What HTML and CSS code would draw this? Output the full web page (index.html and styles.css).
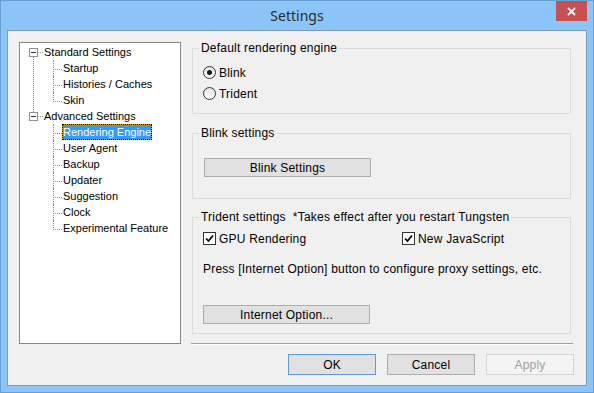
FILE: index.html
```html
<!DOCTYPE html>
<html lang="en">
<head>
  <meta charset="UTF-8" />
  <title>Settings</title>
  <link rel="stylesheet" href="styles.css">
</head>
<body>
  <div class="window">
    <div class="titlebar">
      <span class="title">Settings</span>
      <button class="close" type="button" aria-label="Close">
        <svg width="9" height="9" viewBox="0 0 9 9"><path d="M1 1L8 8M8 1L1 8" stroke="#fff" stroke-width="1.8" fill="none"/></svg>
      </button>
    </div>

    <div class="client">
      <ul class="tree">
        <li class="node">
          <div class="row"><span class="toggle"></span><span class="dash"></span><span class="label">Standard Settings</span></div>
          <ul class="children">
            <li class="leaf"><span class="label">Startup</span></li>
            <li class="leaf"><span class="label">Histories / Caches</span></li>
            <li class="leaf"><span class="label">Skin</span></li>
          </ul>
        </li>
        <li class="node">
          <div class="row"><span class="toggle"></span><span class="dash"></span><span class="label">Advanced Settings</span></div>
          <ul class="children">
            <li class="leaf"><span class="label selected">Rendering Engine</span></li>
            <li class="leaf"><span class="label">User Agent</span></li>
            <li class="leaf"><span class="label">Backup</span></li>
            <li class="leaf"><span class="label">Updater</span></li>
            <li class="leaf"><span class="label">Suggestion</span></li>
            <li class="leaf"><span class="label">Clock</span></li>
            <li class="leaf"><span class="label">Experimental Feature</span></li>
          </ul>
        </li>
      </ul>

      <div class="panel">
        <section class="group group-engine">
          <span class="group-title">Default rendering engine</span>
          <label class="option"><span class="radio checked"></span>Blink</label>
          <label class="option"><span class="radio"></span>Trident</label>
        </section>

        <section class="group group-blink">
          <span class="group-title">Blink settings</span>
          <button class="btn btn-wide" type="button">Blink Settings</button>
        </section>

        <section class="group group-trident">
          <span class="group-title">Trident settings  *Takes effect after you restart Tungsten</span>
          <div class="checks">
            <label class="option"><span class="check"><svg width="9" height="9" viewBox="0 0 9 9"><path d="M1 4.5L3.5 7L8 1.5" stroke="#000" stroke-width="1.7" fill="none"/></svg></span>GPU Rendering</label>
            <label class="option"><span class="check"><svg width="9" height="9" viewBox="0 0 9 9"><path d="M1 4.5L3.5 7L8 1.5" stroke="#000" stroke-width="1.7" fill="none"/></svg></span>New JavaScript</label>
          </div>
          <p class="note">Press [Internet Option] button to configure proxy settings, etc.</p>
          <button class="btn btn-wide" type="button">Internet Option...</button>
        </section>

        <div class="separator"></div>

        <div class="actions">
          <button class="btn btn-default" type="button">OK</button>
          <button class="btn" type="button">Cancel</button>
          <button class="btn" type="button" disabled>Apply</button>
        </div>
      </div>
    </div>
  </div>
</body>
</html>
```

FILE: styles.css
```css
:root {
  --frame: #8bc5f7;
  --face: #f0f0f0;
  --dots: #8a8a8a;
}

* {
  box-sizing: border-box;
}

body {
  margin: 0;
  width: 594px;
  height: 393px;
  overflow: hidden;
  font-family: "Liberation Sans", Arial, sans-serif;
  font-size: 12px;
  line-height: 14px;
  color: #000;
}

.window {
  width: 594px;
  height: 393px;
  border: 1px solid #6a9fd4;
  background: var(--frame);
  display: flex;
  flex-direction: column;
  padding: 0 6px 6px;
}

.titlebar {
  position: relative;
  height: 29px;
  margin: 0 -6px;
  text-align: center;
}

.title {
  font-family: "Noto Sans", "Open Sans", sans-serif;
  font-size: 14px;
  line-height: 29px;
  color: #2b2b2b;
}

.close {
  position: absolute;
  top: 0;
  right: 6px;
  width: 31px;
  height: 20px;
  padding: 0;
  border: 0;
  background: #c75050;
  display: flex;
  align-items: center;
  justify-content: center;
}

.client {
  flex: 1;
  display: flex;
  border: 1px solid #7a9bbf;
  background: var(--face);
  padding: 11px 12px 0 11px;
}

/* tree view */

.tree {
  width: 162px;
  height: 302px;
  margin: 0;
  padding: 1px 0 0;
  list-style: none;
  border: 1px solid #828790;
  background: #fff;
  font-size: 11px;
}

.tree ul {
  list-style: none;
  margin: 0;
  padding: 0;
}

.node {
  position: relative;
}

.node:first-child::after {
  content: "";
  position: absolute;
  left: 13px;
  top: 13px;
  height: 55px;
  border-left: 1px dotted var(--dots);
}

.row {
  display: flex;
  align-items: center;
  height: 16px;
  padding-left: 9px;
}

.toggle {
  width: 9px;
  height: 9px;
  border: 1px solid #919191;
  background: #fff;
  display: flex;
  align-items: center;
  justify-content: center;
}

.toggle::after {
  content: "";
  width: 5px;
  height: 1px;
  background: #333;
}

.dash {
  width: 5px;
  height: 0;
  border-top: 1px dotted var(--dots);
}

.label {
  border: 1px solid transparent;
  line-height: 14px;
  white-space: nowrap;
}

.label.selected {
  color: #fff;
  border: 1px dotted #000;
  background: linear-gradient(#3399ff, #3399ff) padding-box,
              linear-gradient(#e0a000, #e0a000) border-box;
}

.children {
  margin-left: 33px !important;
}

.leaf {
  position: relative;
  height: 16px;
  display: flex;
  align-items: center;
  padding-left: 9px;
}

.leaf::before {
  content: "";
  position: absolute;
  left: 0;
  top: 0;
  width: 8px;
  height: 9px;
  border-left: 1px dotted var(--dots);
  border-bottom: 1px dotted var(--dots);
}

.leaf:not(:last-child)::after {
  content: "";
  position: absolute;
  left: 0;
  top: 9px;
  bottom: 0;
  border-left: 1px dotted var(--dots);
}

/* right side */

.panel {
  width: 383px;
  margin-left: 10px;
  display: flex;
  flex-direction: column;
  letter-spacing: 0.2px;
}

.group {
  position: relative;
  width: 379px;
  margin-left: 1px;
  border: 1px solid #dcdcdc;
}

.group-title {
  position: absolute;
  top: -8px;
  left: 6px;
  padding: 0 2px;
  background: var(--face);
  white-space: pre;
}

.group-engine {
  margin-top: 6px;
  height: 66px;
  padding: 13px 0 0 10px;
}

.group-blink {
  margin-top: 19px;
  height: 66px;
  padding: 24px 0 0 11px;
}

.group-trident {
  margin-top: 18px;
  height: 117px;
  padding: 14px 0 0 10px;
}

.option {
  display: flex;
  align-items: center;
  height: 21px;
}

.radio {
  width: 13px;
  height: 13px;
  margin-right: 3px;
  border: 1px solid #333;
  border-radius: 50%;
  background: linear-gradient(#e4e4e4, #fff);
  display: flex;
  align-items: center;
  justify-content: center;
}

.radio.checked::after {
  content: "";
  width: 5px;
  height: 5px;
  border-radius: 50%;
  background: #1a1a1a;
}

.checks {
  display: flex;
}

.checks .option {
  height: 13px;
}

.checks .option:first-child {
  width: 199px;
}

.check {
  width: 13px;
  height: 13px;
  margin-right: 3px;
  border: 1px solid #333;
  background: #fff;
  display: flex;
  align-items: center;
  justify-content: center;
}

.note {
  margin: 17px 0 0;
}

.btn {
  font-family: inherit;
  font-size: 12px;
  letter-spacing: 0.2px;
  color: #000;
  background: #e1e1e1;
  border: 1px solid #adadad;
  padding: 0;
}

.btn-wide {
  display: block;
  width: 167px;
  height: 19px;
}

.group-trident .btn-wide {
  margin-top: 29px;
}

.separator {
  width: 382px;
  margin-top: 9px;
  border-top: 1px solid #a0a0a0;
  border-bottom: 1px solid #fff;
}

.actions {
  margin-top: 9px;
  display: flex;
  justify-content: flex-end;
  gap: 11px;
}

.actions .btn {
  width: 88px;
  height: 21px;
}

.btn-default {
  border-color: #569de5;
}

.btn:disabled {
  color: #a0a0a0;
  background: #f4f4f4;
  border-color: #d5d5d5;
}
```
